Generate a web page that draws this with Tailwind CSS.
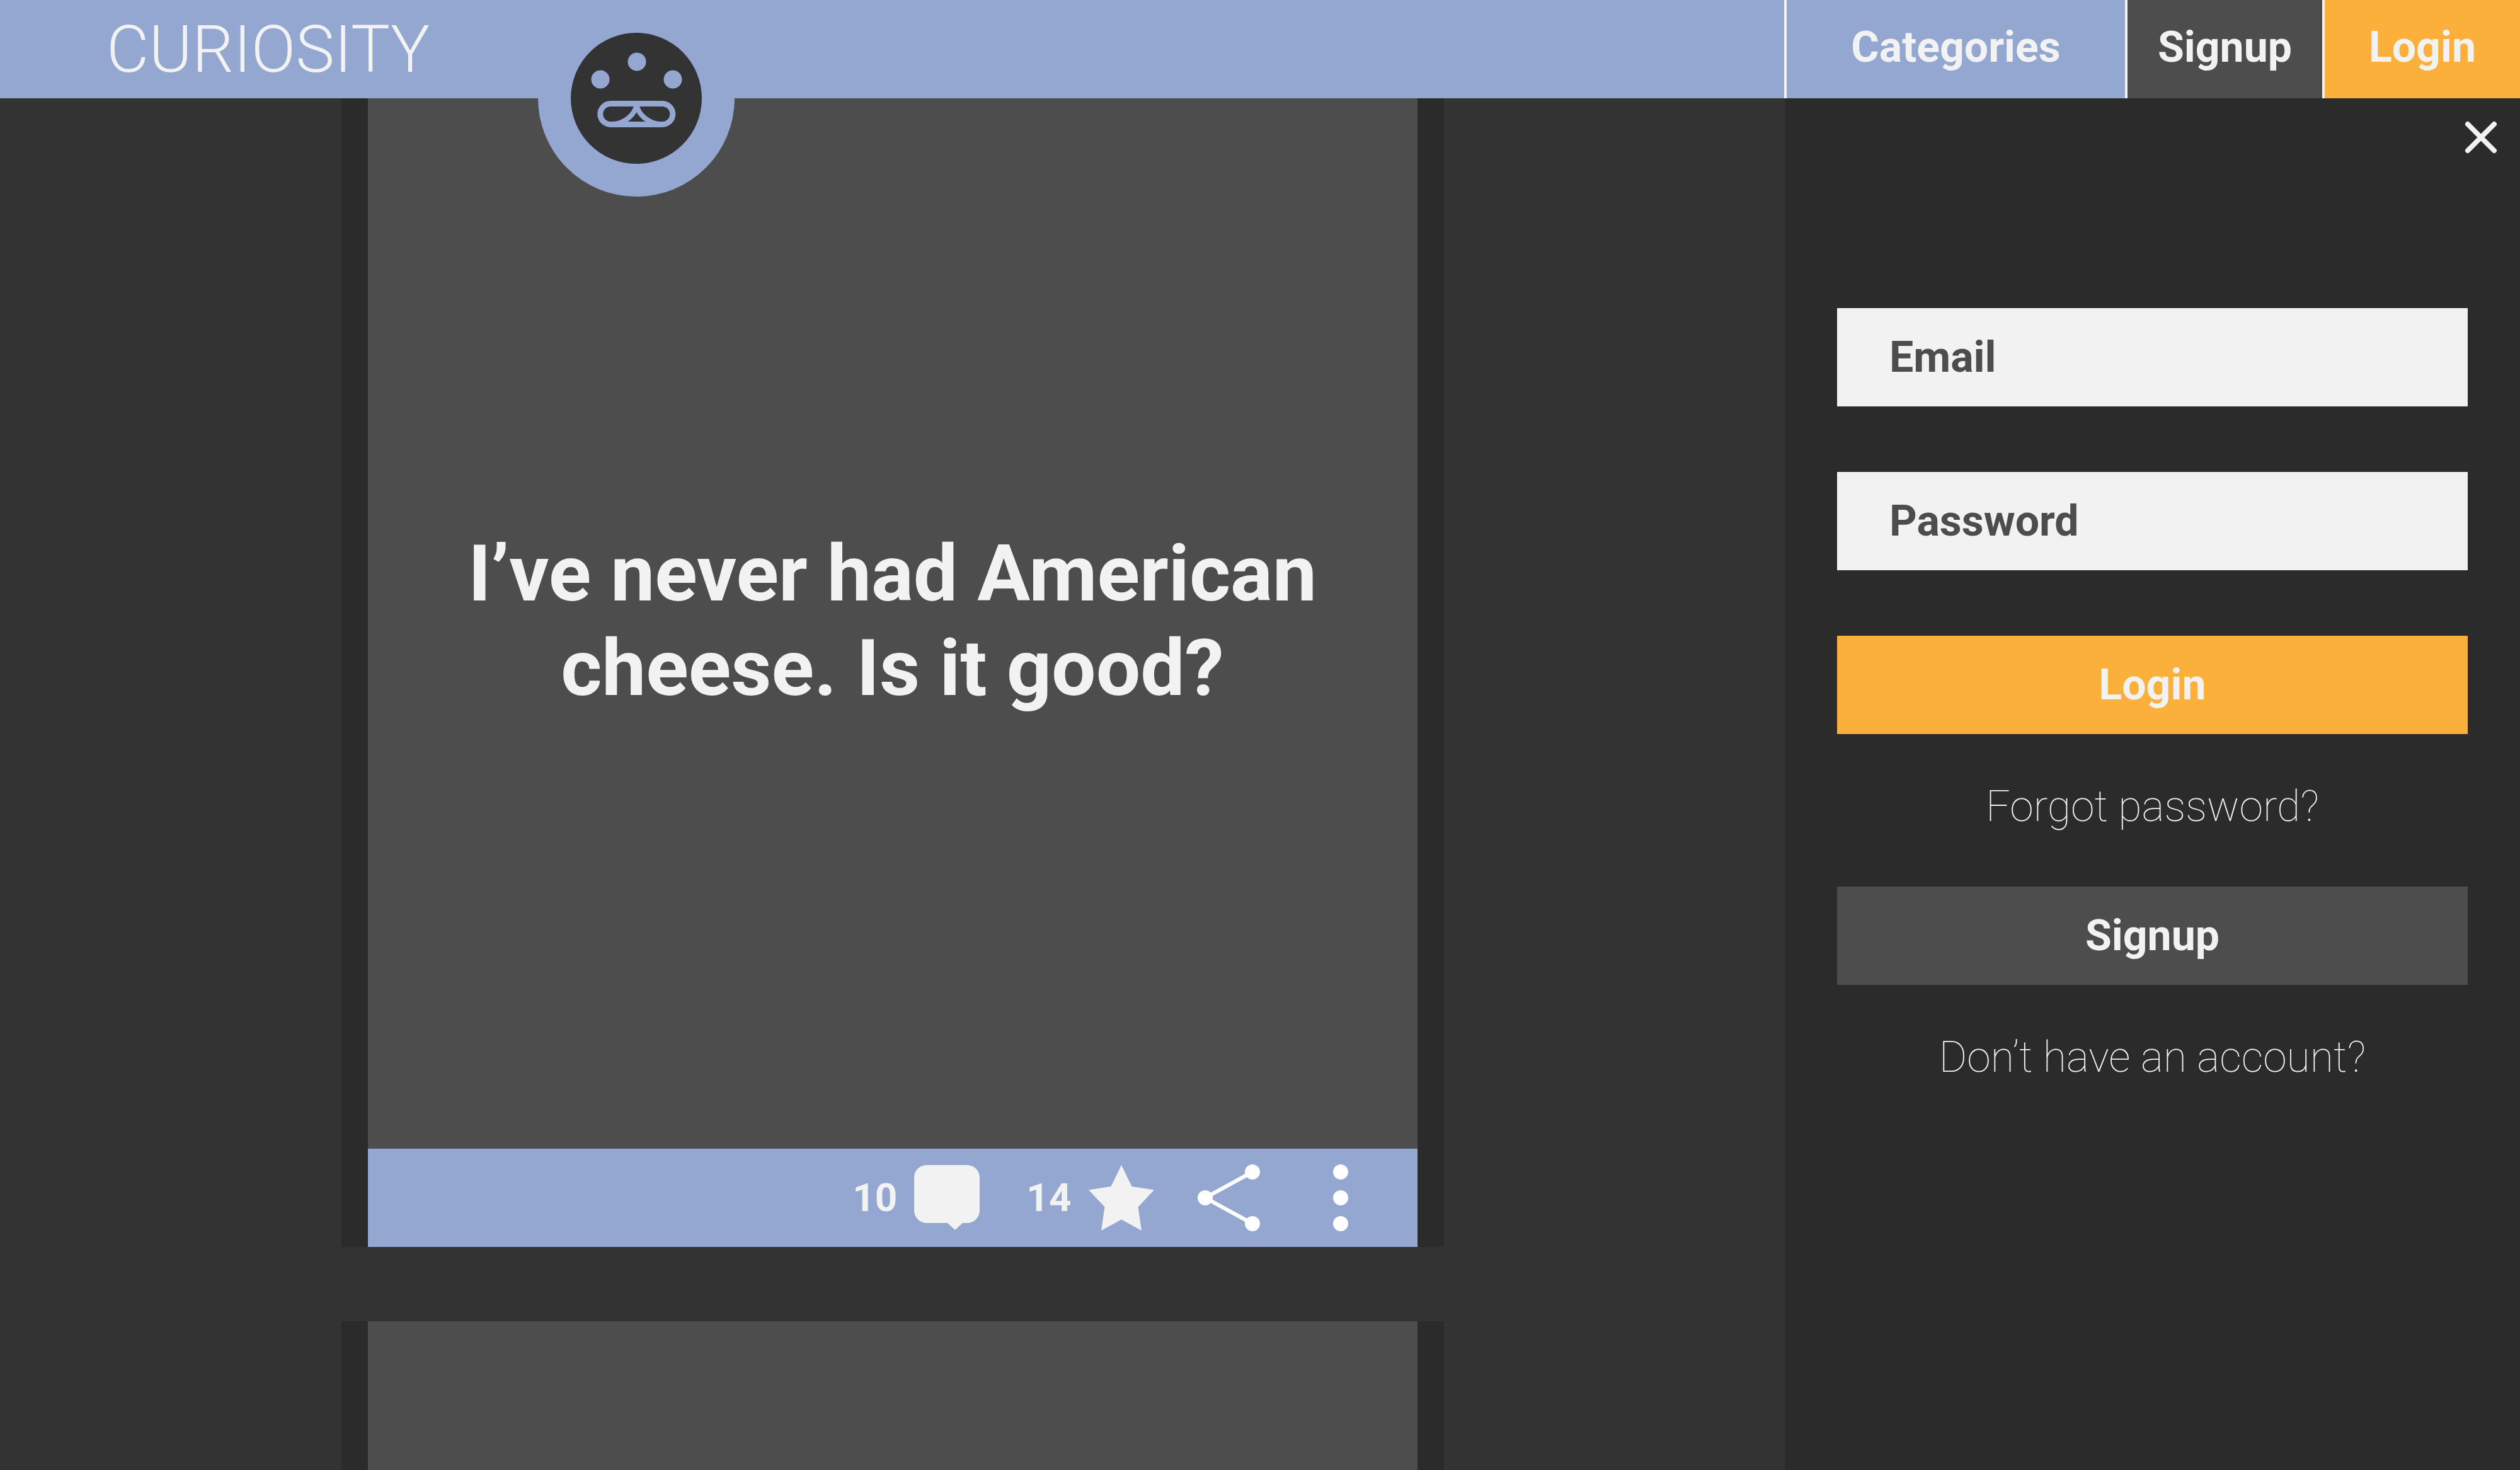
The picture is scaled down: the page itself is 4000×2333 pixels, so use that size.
<!DOCTYPE html>
<html lang="en">
<head>
<meta charset="utf-8">
<title>Curiosity</title>
<script src="https://cdn.jsdelivr.net/npm/@tailwindcss/browser@4"></script>
</head>
<body class="flex h-screen flex-col overflow-hidden bg-[#333333] font-['Roboto',sans-serif] text-[68px] leading-[78px] text-[#f2f2f2]">
  <header class="relative z-10 flex h-[156px] shrink-0 items-stretch justify-between bg-[#94a7d1]">
    <a href="#" class="flex items-center pt-[2px] pl-[169px] text-[104px] leading-[150px] font-light">CURIOSITY</a>
    <a href="#" aria-label="Profile" class="absolute top-0 left-[854px] size-[312px]">
      <svg viewBox="0 0 312 312" class="size-full">
        <path d="M0 156a156 156 0 0 0 312 0V150H0z" fill="#94a7d1"/>
        <circle cx="156" cy="156" r="104" fill="#333333"/>
        <g fill="#94a7d1">
          <circle cx="157" cy="98" r="14.5"/>
          <circle cx="99" cy="126" r="14.5"/>
          <circle cx="214" cy="126" r="14.5"/>
        </g>
        <g fill="none" stroke="#94a7d1">
          <rect x="98.800" y="164.500" width="115" height="33" rx="16.500" stroke-width="9"/>
          <path d="M156.500 165C155 182 136 197 118 197M156.500 165C158 182 177 197 195 197" stroke-width="8"/>
        </g>
      </svg>
    </a>
    <nav class="flex font-bold">
      <a href="#" class="flex w-[541px] items-center justify-center border-l-4 border-[#f2f2f2] pb-[6px]">Categories</a>
      <a href="#" class="flex w-[313px] items-center justify-center border-l-4 border-[#f2f2f2] bg-[#4d4d4d] pb-[6px]">Signup</a>
      <a href="#" class="flex w-[314px] items-center justify-center border-l-4 border-[#f2f2f2] bg-[#fbb03b] pb-[6px]">Login</a>
    </nav>
  </header>

  <div class="flex min-h-0 flex-1">
    <main class="flex min-w-0 flex-1 flex-col items-center gap-[118px] overflow-hidden">
      <article class="flex w-full max-w-[1750px] shrink-0 flex-col bg-[#2b2b2b] px-[42px]">
        <div class="flex h-[1667px] items-center justify-center bg-[#4d4d4d] px-[125px] pb-[8px]">
          <h1 class="text-center text-[125px] leading-[150px] font-bold">I’ve never had American cheese. Is it good?</h1>
        </div>
        <footer class="flex h-[156px] items-center justify-end bg-[#94a7d1] pr-[110px] text-[62px] font-bold">
          <button type="button" class="mr-[73px] flex items-center gap-[26px]">10
            <svg viewBox="0 0 106 106" class="size-[106px]" fill="#f2f2f2"><path d="M21 1H85a20 20 0 0 1 20 20V73a20 20 0 0 1-20 20H78L66 104 54 93H21A20 20 0 0 1 1 73V21A20 20 0 0 1 21 1z"/></svg>
          </button>
          <button type="button" class="mr-[68px] flex items-center gap-[26px]">14
            <svg viewBox="0 0 106 106" class="size-[106px]" fill="#f2f2f2"><path d="M53 1 69.500 35 105 40.500 79.500 67.500 85 105 53 87.500 21 105 26.500 67.500 1 40.500 36.500 35z"/></svg>
          </button>
          <button type="button" aria-label="Share" class="mr-[115px]">
            <svg viewBox="0 0 100 106" class="h-[106px] w-[100px]" fill="#fff"><path d="M87 12 12 53 87 94" fill="none" stroke="#fff" stroke-width="6"/><circle cx="87" cy="12" r="12"/><circle cx="12" cy="53" r="12"/><circle cx="87" cy="94" r="12"/></svg>
          </button>
          <button type="button" aria-label="More">
            <svg viewBox="0 0 24 106" class="h-[106px] w-[24px]" fill="#fff"><circle cx="12" cy="12" r="12"/><circle cx="12" cy="53" r="12"/><circle cx="12" cy="94" r="12"/></svg>
          </button>
        </footer>
      </article>
      <article class="flex w-full max-w-[1750px] shrink-0 flex-col bg-[#2b2b2b] px-[42px]">
        <div class="h-[1667px] bg-[#4d4d4d]"></div>
      </article>
    </main>

    <aside class="relative w-[1167px] shrink-0 bg-[#2b2b2b] px-[83px] pt-[333px]">
      <button type="button" aria-label="Close" class="absolute top-[36px] right-[36px]">
        <svg viewBox="0 0 52 52" class="size-[52px]" fill="none" stroke="#f2f2f2" stroke-width="8" stroke-linecap="round"><path d="M5 5 47 47M47 5 5 47"/></svg>
      </button>
      <form class="flex flex-col">
        <input type="email" aria-label="Email" placeholder="Email" class="mb-[104px] h-[156px] w-full bg-[#f2f2f2] px-[83px] font-bold text-[#4d4d4d] placeholder:text-[#4d4d4d] placeholder:opacity-100">
        <input type="password" aria-label="Password" placeholder="Password" class="mb-[104px] h-[156px] w-full bg-[#f2f2f2] px-[83px] font-bold text-[#4d4d4d] placeholder:text-[#4d4d4d] placeholder:opacity-100">
        <button type="submit" class="h-[156px] bg-[#fbb03b] font-bold">Login</button>
        <a href="#" class="mt-[76px] mb-[88px] text-center font-thin">Forgot password?</a>
        <button type="button" class="h-[156px] bg-[#4d4d4d] font-bold">Signup</button>
        <a href="#" class="mt-[76px] text-center font-thin">Don’t have an account?</a>
      </form>
    </aside>
  </div>
</body>
</html>
